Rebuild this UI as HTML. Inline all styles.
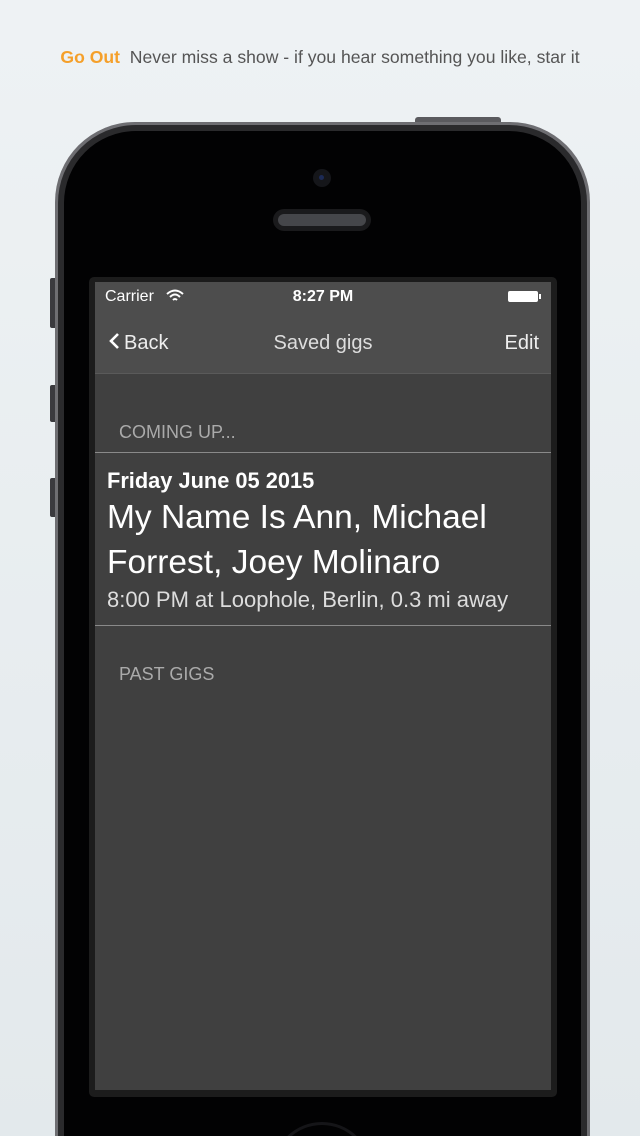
<!DOCTYPE html>
<html style="margin:0;width:640px;height:1136px;overflow:hidden"><head><style>
body{margin:0;width:640px;height:1136px;overflow:hidden;background:linear-gradient(#eef2f4,#e3e9ec);font-family:"Liberation Sans",sans-serif;position:relative}
.a{position:absolute}
</style></head><body>
<div class="a" style="left:0;top:47px;width:640px;text-align:center;font-size:17.6px;color:#555"><span style="color:#f5a02a;font-weight:bold">Go Out</span>&nbsp; Never miss a show - if you hear something you like, star it</div>
<div class="a" style="left:415px;top:117px;width:86px;height:8px;background:#5a5a5e;border-radius:3px 3px 0 0"></div>
<div class="a" style="left:50px;top:278px;width:8px;height:50px;background:#3a3a3e;border-radius:2px"></div>
<div class="a" style="left:50px;top:385px;width:8px;height:37px;background:#3a3a3e;border-radius:2px"></div>
<div class="a" style="left:50px;top:478px;width:8px;height:39px;background:#3a3a3e;border-radius:2px"></div>
<div class="a" style="left:55px;top:122px;width:535px;height:1014px;border-radius:80px 80px 0 0;background:#6e6e72;"></div>
<div class="a" style="left:58px;top:125px;width:529px;height:1011px;border-radius:78px 78px 0 0;background:#2a2a2c;"></div>
<div class="a" style="left:64px;top:131px;width:517px;height:1005px;border-radius:72px 72px 0 0;background:#020203;"></div>
<div class="a" style="left:313px;top:169px;width:18px;height:18px;border-radius:50%;background:#15161a"></div>
<div class="a" style="left:319px;top:175px;width:5px;height:5px;border-radius:50%;background:#1c2a55"></div>
<div class="a" style="left:273px;top:209px;width:98px;height:22px;border-radius:11px;background:#1a1a1c"></div>
<div class="a" style="left:278px;top:214px;width:88px;height:12px;border-radius:6px;background:#45464a"></div>
<div class="a" style="left:89px;top:277px;width:468px;height:820px;border-radius:5px;background:#1c1c1c"></div>
<div class="a" style="left:95px;top:282px;width:456px;height:808px;background:#404040;overflow:hidden">
 <div class="a" style="left:0;top:0;width:456px;height:91px;background:#4d4d4d;border-bottom:1px solid #5a5a5a"></div>
 <div class="a" style="left:10px;top:6px;font-size:16px;color:#fff">Carrier</div>
 <svg class="a" style="left:71px;top:7px" width="18" height="14" viewBox="0 0 18 14"><path d="M1 5 Q9 -2 17 5 M4 8 Q9 3 14 8 M7 11 Q9 9 11 11" stroke="#fff" stroke-width="2" fill="none"/></svg>
 <div class="a" style="left:0;top:6px;width:456px;text-align:center;font-size:16px;font-weight:bold;color:#fff">8:27 PM</div>
 <div class="a" style="left:413px;top:9px;width:30px;height:11px;background:#fff;border-radius:2px"></div>
 <div class="a" style="left:444px;top:12px;width:2px;height:5px;background:#fff"></div>
 <svg class="a" style="left:13px;top:50px" width="12" height="18"><path d="M10 2 L3 9 L10 16" stroke="#fff" stroke-width="2.6" fill="none"/></svg>
 <div class="a" style="left:29px;top:50px;font-size:20px;color:#eee">Back</div>
 <div class="a" style="left:0;top:50px;width:456px;text-align:center;font-size:20px;color:#ddd">Saved gigs</div>
 <div class="a" style="right:12px;top:50px;font-size:20px;color:#eee">Edit</div>
 <div class="a" style="left:24px;top:140px;font-size:18px;color:#aaa">COMING UP...</div>
 <div class="a" style="left:0;top:170px;width:456px;height:1px;background:#8a8a8a"></div>
 <div class="a" style="left:12px;top:186px;font-size:21.8px;font-weight:bold;color:#fff">Friday June 05 2015</div>
 <div class="a" style="left:12px;top:213px;font-size:33.5px;line-height:45px;color:#fff">My Name Is Ann, Michael<br>Forrest, Joey Molinaro</div>
 <div class="a" style="left:12px;top:305px;font-size:22px;color:#ddd">8:00 PM at Loophole, Berlin, 0.3 mi away</div>
 <div class="a" style="left:0;top:343px;width:456px;height:1px;background:#8a8a8a"></div>
 <div class="a" style="left:24px;top:382px;font-size:18px;color:#aaa">PAST GIGS</div>
</div>
<div class="a" style="left:272px;top:1122px;width:100px;height:14px;overflow:hidden"><div style="width:94px;height:94px;border-radius:50%;border:3px solid #151518"></div></div>
</body></html>
